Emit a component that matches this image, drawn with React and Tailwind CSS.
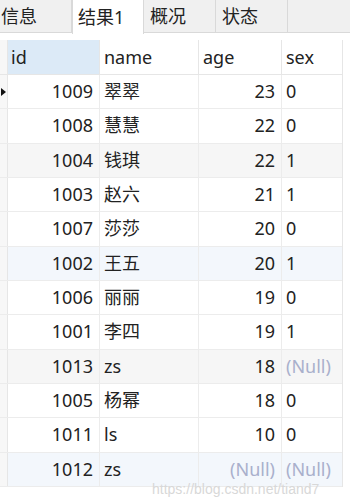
import React from "react";

const rows = [
  { id: 1009, name: "翠翠", age: 23, sex: 0 },
  { id: 1008, name: "慧慧", age: 22, sex: 0 },
  { id: 1004, name: "钱琪", age: 22, sex: 1 },
  { id: 1003, name: "赵六", age: 21, sex: 1 },
  { id: 1007, name: "莎莎", age: 20, sex: 0 },
  { id: 1002, name: "王五", age: 20, sex: 1 },
  { id: 1006, name: "丽丽", age: 19, sex: 0 },
  { id: 1001, name: "李四", age: 19, sex: 1 },
  { id: 1013, name: "zs", age: 18, sex: null },
  { id: 1005, name: "杨幂", age: 18, sex: 0 },
  { id: 1011, name: "ls", age: 10, sex: 0 },
  { id: 1012, name: "zs", age: null, sex: null },
];

const rowBg = (i) => {
  if (i === 2 || i === 8) return "bg-[#f6f6f6]";
  if (i === 5 || i === 11) return "bg-[#f3f7fc]";
  return "bg-white";
};

const Null = () => <span className="text-[#a9b0cc]">(Null)</span>;

const tabs = ["信息", "结果1", "概况", "状态"];

export default function App() {
  return (
    <div
      className="relative w-[350px] h-[500px] bg-white overflow-hidden text-[#222]"
      style={{ fontFamily: '"Noto Sans", "Noto Sans CJK SC", sans-serif' }}
    >
      <div className="flex h-[33px] bg-[#f0f0f0] border-b border-[#d9d9d9]">
        {tabs.map((t, i) => (
          <div
            key={t}
            className={
              "w-[72px] h-[33px] flex items-center text-[18px] border-r border-[#d9d9d9] " +
              (i === 1 ? "bg-white h-[34px] pl-[5px] border-l" : i === 0 ? "pl-[1px]" : "pl-[6px]")
            }
          >
            {t}
          </div>
        ))}
      </div>

      <div className="mt-[7px] w-[343px] border-r border-[#e6e6e6]">
        <div className="flex h-[35px] text-[18px] border-b border-[#e6e6e6]">
          <div className="w-[8px] bg-[#f7f7f7] border-r border-[#e6e6e6]" />
          <div className="w-[92px] bg-[#dceaf7] flex items-center pl-[3px] border-r border-[#e6e6e6]">id</div>
          <div className="w-[99px] flex items-center pl-[4px] border-r border-[#e6e6e6]">name</div>
          <div className="w-[83px] flex items-center pl-[4px] border-r border-[#e6e6e6]">age</div>
          <div className="flex-1 flex items-center pl-[4px]">sex</div>
        </div>
        {rows.map((r, i) => (
          <div key={r.id} className={"flex h-[34.33px] text-[18px] border-b border-[#ececec] " + rowBg(i)}>
            <div className="w-[8px] bg-[#f7f7f7] border-r border-[#e6e6e6] flex items-center relative">
              {i === 0 && (
                <svg width="6" height="10" viewBox="0 0 6 10" className="absolute left-[1px]">
                  <path d="M0 1 L5 5 L0 9 Z" fill="#111" />
                </svg>
              )}
            </div>
            <div className="w-[92px] flex items-center justify-end pr-[6px] border-r border-[#ececec]">{r.id}</div>
            <div className="w-[99px] flex items-center pl-[4px] border-r border-[#ececec]">{r.name}</div>
            <div className="w-[83px] flex items-center justify-end pr-[6px] border-r border-[#ececec]">
              {r.age === null ? <Null /> : r.age}
            </div>
            <div className="flex-1 flex items-center pl-[4px]">{r.sex === null ? <Null /> : r.sex}</div>
          </div>
        ))}
      </div>

      <div
        className="absolute left-[152px] top-[480px] text-[14px] leading-[18px] text-[#d8d8d8] whitespace-nowrap"
        style={{ fontFamily: '"Liberation Sans", sans-serif' }}
      >
        https://blog.csdn.net/tiand7
      </div>
    </div>
  );
}
